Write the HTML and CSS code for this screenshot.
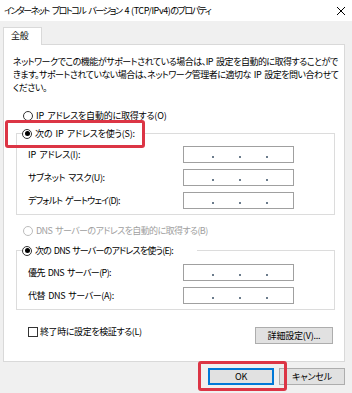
FILE: index.html
```html
<!DOCTYPE html>
<html lang="ja">
<head>
<meta charset="utf-8">
<link rel="stylesheet" href="styles.css">
</head>
<body>
<div class="window">
  <div class="titlebar">
    <span class="title">インターネット プロトコル バージョン 4 <span class="latin">(TCP/IPv4)</span>のプロパティ</span>
    <svg class="close" width="10" height="10" viewBox="0 0 10 10"><path d="M1 1L9 9M9 1L1 9" stroke="#000" stroke-width="1" fill="none"/></svg>
  </div>
  <div class="content">
    <div class="tabs"><div class="tab">全般</div></div>
    <div class="panel">
      <p class="desc">ネットワークでこの機能がサポートされている場合は、IP 設定を自動的に取得することがで<br>きます。サポートされていない場合は、ネットワーク管理者に適切な IP 設定を問い合わせて<br>ください。</p>
      <label class="radio r-auto"><span class="rb"></span>IP アドレスを自動的に取得する(O)</label>
      <fieldset class="group g-ip">
        <legend class="lg-ip"><span class="radio"><span class="rb on"></span>次の IP アドレスを使う(S):</span></legend>
        <div class="row"><span class="lbl">IP アドレス(I):</span><div class="ipbox"><i></i><i></i><i></i></div></div>
        <div class="row"><span class="lbl t1">サブネット マスク(U):</span><div class="ipbox"><i></i><i></i><i></i></div></div>
        <div class="row"><span class="lbl t3">デフォルト ゲートウェイ(D):</span><div class="ipbox"><i></i><i></i><i></i></div></div>
      </fieldset>
      <label class="radio r-dns disabled t2"><span class="rb"></span>DNS サーバーのアドレスを自動的に取得する(B)</label>
      <fieldset class="group g-dns">
        <legend class="lg-dns"><span class="radio t3"><span class="rb on"></span>次の DNS サーバーのアドレスを使う(E):</span></legend>
        <div class="row"><span class="lbl t2">優先 DNS サーバー(P):</span><div class="ipbox"><i></i><i></i><i></i></div></div>
        <div class="row"><span class="lbl t1">代替 DNS サーバー(A):</span><div class="ipbox"><i></i><i></i><i></i></div></div>
      </fieldset>
      <div class="bottom-row">
        <label class="check t1"><span class="cb"></span>終了時に設定を検証する(L)</label>
        <button class="btn adv">詳細設定(V)...</button>
      </div>
    </div>
    <div class="footer">
      <button class="btn ok">OK</button>
      <button class="btn cancel">キャンセル</button>
    </div>
  </div>
  <div class="hl hl-ip"></div>
  <div class="hl hl-ok"></div>
</div>
</body>
</html>
```
FILE: styles.css
```css
* { box-sizing: border-box; }
html, body { margin: 0; padding: 0; }
body {
  width: 352px;
  height: 393px;
  overflow: hidden;
  background: #f0f0f0;
  font-family: "Noto Sans CJK JP", "Noto Sans", sans-serif;
  font-size: 9px;
  letter-spacing: -0.2px;
  word-spacing: 1.5px;
  font-feature-settings: "palt";
  color: #000;
}
.t1 { letter-spacing: -0.4px; }
.t2 { letter-spacing: -0.6px; }
.t3 { letter-spacing: -0.8px; }
.window { position: relative; width: 352px; height: 393px; }
.titlebar {
  height: 21px;
  background: #fff;
  display: flex;
  align-items: center;
  justify-content: space-between;
  padding: 0 6px 0 4px;
}
.title { line-height: 13px; letter-spacing: -1.5px; word-spacing: 2.5px; }
.title .latin { letter-spacing: -0.4px; }
.close { display: block; }
.content { padding: 6px 7px 0 3px; }
.tabs { display: flex; height: 17px; }
.tab {
  width: 39px;
  height: 18px;
  background: #fff;
  border: 1px solid #d9d9d9;
  border-bottom: none;
  padding-left: 7px;
  line-height: 16px;
  position: relative;
  z-index: 1;
}
.panel {
  background: #fff;
  border: 1px solid #d9d9d9;
  height: 318px;
  padding: 10px 11px 0 0;
}
.desc { margin: 0 0 0 9px; line-height: 13px; white-space: nowrap; letter-spacing: -0.5px; }
.radio { display: flex; align-items: center; line-height: 13px; white-space: nowrap; }
.rb {
  width: 10px; height: 10px;
  border: 1px solid #333;
  border-radius: 50%;
  background: #fff;
  margin-right: 3px;
  display: flex; align-items: center; justify-content: center;
  flex: none;
}
.rb.on::after { content: ""; width: 5px; height: 5px; border-radius: 50%; background: #000; }
.r-auto { margin: 15px 0 0 19px; }
.disabled { color: #a0a0a0; }
.disabled .rb { border-color: #bcbcbc; }
.group {
  margin: 0 0 0 12px;
  width: 319px;
  border: 1px solid #dcdcdc;
  padding: 0 0 5px 11px;
}
.g-ip { margin-top: 5px; padding-top: 6px; }
.g-dns { margin-top: 7px; padding-top: 7px; }
.group legend { padding: 0; margin-left: -6px; }
.lg-ip { width: 120px; }
.lg-dns { width: 175px; }
.r-dns { margin: 9px 0 0 19px; }
.row { display: flex; align-items: center; height: 17px; margin-bottom: 6px; }
.row:last-child { margin-bottom: 0; }
.lbl { width: 155px; flex: none; }
.ipbox {
  width: 111px; height: 17px;
  border: 1px solid #a0a0a0;
  background: #fff;
  display: flex;
  gap: 25px;
  padding: 9px 0 0 28px;
}
.ipbox i { display: block; width: 2px; height: 2px; background: #6c7c8c; }
.bottom-row {
  display: flex;
  justify-content: space-between;
  align-items: flex-start;
  margin: 16px 0 0 24px;
}
.check { display: flex; align-items: center; line-height: 13px; margin-top: -1px; }
.cb { width: 10px; height: 10px; border: 1px solid #333; background: #fff; margin-right: 2px; }
.btn {
  font: inherit;
  letter-spacing: inherit;
  font-feature-settings: "palt";
  background: #e1e1e1;
  border: 1px solid #adadad;
  height: 17px;
  padding: 0;
  line-height: 15px;
  color: #000;
}
.adv { width: 78px; margin-top: 1px; }
.footer { display: flex; justify-content: flex-end; gap: 5px; margin-top: 6px; }
.ok { width: 66px; border-color: #0078d7; box-shadow: inset 0 0 0 1px #0078d7; }
.cancel { width: 66px; }
.hl {
  position: absolute;
  border: 3px solid #dc3545;
  border-radius: 3px;
}
.hl-ip { left: 5px; top: 120px; width: 140px; height: 28px; }
.hl-ok { left: 198px; top: 361px; width: 89px; height: 30px; }
```
